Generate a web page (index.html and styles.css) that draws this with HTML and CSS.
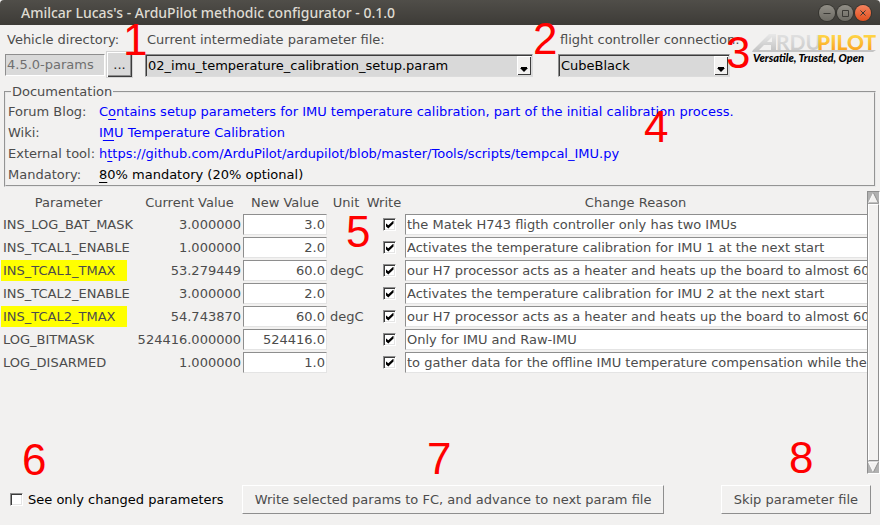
FILE: index.html
```html
<!DOCTYPE html>
<html lang="en">
<head>
<meta charset="utf-8">
<title>Amilcar Lucas's - ArduPilot methodic configurator - 0.1.0</title>
<link rel="stylesheet" href="styles.css">
</head>
<body>
<header class="titlebar">
  <h1 class="title">Amilcar Lucas's - ArduPilot methodic configurator - 0.1.0</h1>
  <div class="window-buttons">
    <button class="wb" aria-label="Minimize"><svg viewBox="0 0 16 16"><path d="M4.5 8.5h7"/></svg></button>
    <button class="wb" aria-label="Maximize"><svg viewBox="0 0 16 16"><path d="M5.5 5.5h6v6h-6z"/></svg></button>
    <button class="wb close" aria-label="Close"><svg viewBox="0 0 16 16"><path d="M5.5 5.5l5 5m0-5l-5 5"/></svg></button>
  </div>
</header>

<section class="top">
  <div class="field directory">
    <label for="dir">Vehicle directory:</label>
    <div class="controls">
      <input id="dir" class="dir-input" value="4.5.0-params" readonly>
      <button class="browse">...</button>
    </div>
  </div>
  <div class="field file">
    <label for="file">Current intermediate parameter file:</label>
    <div class="combo">
      <select id="file"><option>02_imu_temperature_calibration_setup.param</option></select>
      <span class="arrow"><svg viewBox="0 0 8 5"><path d="M1 0h6v1h1L4 5 0 1h1z"/></svg></span>
    </div>
  </div>
  <div class="field connection">
    <label for="conn">flight controller connection:</label>
    <div class="combo">
      <select id="conn"><option>CubeBlack</option></select>
      <span class="arrow"><svg viewBox="0 0 8 5"><path d="M1 0h6v1h1L4 5 0 1h1z"/></svg></span>
    </div>
  </div>
  <svg class="logo" viewBox="0 0 126 36" role="img" aria-label="ArduPilot">
    <defs>
      <linearGradient id="silver" x1="0" y1="0" x2="0" y2="1"><stop offset="0" stop-color="#e8e8e8"/><stop offset="1" stop-color="#c6c6c6"/></linearGradient>
      <linearGradient id="gold" x1="0" y1="0" x2="0" y2="1"><stop offset="0.2" stop-color="#ffd94a"/><stop offset="0.9" stop-color="#f9a01f"/></linearGradient>
    </defs>
    <path d="M1 20h123l-3 2H0z" fill="#c4c4c4"/>
    <path d="M1 20L17 4h7v16h-5v-5h-7l-5 5z" fill="url(#silver)"/>
    <path d="M15 12l5-5v5z" fill="#f2f1f0"/>
    <text class="brand" x="24" y="20" fill="url(#silver)">RDU</text>
    <text class="brand gold" x="65" y="20" fill="url(#gold)">PILOT</text>
    <text class="motto" x="1" y="32">Versatile, Trusted, Open</text>
  </svg>
</section>

<fieldset class="docs">
  <legend>Documentation</legend>
  <dl>
    <dt>Forum Blog:</dt><dd><a href="#blog">C<u>o</u>ntains setup parameters for IMU temperature calibration, part of the initial calibration process.</a></dd>
    <dt>Wiki:</dt><dd><a href="#wiki">I<u>M</u>U Temperature Calibration</a></dd>
    <dt>External tool:</dt><dd><a href="#tool">h<u>t</u>tps://github.com/ArduPilot/ardupilot/blob/master/Tools/scripts/tempcal_IMU.py</a></dd>
    <dt>Mandatory:</dt><dd><u>8</u>0% mandatory (20% optional)</dd>
  </dl>
</fieldset>

<main class="params">
  <div class="scroll">
    <table>
      <colgroup><col class="c-name"><col class="c-cur"><col class="c-new"><col class="c-unit"><col class="c-write"><col></colgroup>
      <thead><tr><th>Parameter</th><th>Current Value</th><th>New Value</th><th>Unit</th><th>Write</th><th>Change Reason</th></tr></thead>
      <tbody>
        <tr><td><span class="name">INS_LOG_BAT_MASK</span></td><td class="num">3.000000</td><td><input class="entry num" aria-label="New value" value="3.0"></td><td></td><td class="write"><input type="checkbox" aria-label="Write" checked></td><td><input class="entry" aria-label="Change reason" value="the Matek H743 fligth controller only has two IMUs"></td></tr>
        <tr><td><span class="name">INS_TCAL1_ENABLE</span></td><td class="num">1.000000</td><td><input class="entry num" aria-label="New value" value="2.0"></td><td></td><td class="write"><input type="checkbox" aria-label="Write" checked></td><td><input class="entry" aria-label="Change reason" value="Activates the temperature calibration for IMU 1 at the next start"></td></tr>
        <tr><td><span class="name missing">INS_TCAL1_TMAX</span></td><td class="num">53.279449</td><td><input class="entry num" aria-label="New value" value="60.0"></td><td>degC</td><td class="write"><input type="checkbox" aria-label="Write" checked></td><td><input class="entry" aria-label="Change reason" value="our H7 processor acts as a heater and heats up the board to almost 60"></td></tr>
        <tr><td><span class="name">INS_TCAL2_ENABLE</span></td><td class="num">3.000000</td><td><input class="entry num" aria-label="New value" value="2.0"></td><td></td><td class="write"><input type="checkbox" aria-label="Write" checked></td><td><input class="entry" aria-label="Change reason" value="Activates the temperature calibration for IMU 2 at the next start"></td></tr>
        <tr><td><span class="name missing">INS_TCAL2_TMAX</span></td><td class="num">54.743870</td><td><input class="entry num" aria-label="New value" value="60.0"></td><td>degC</td><td class="write"><input type="checkbox" aria-label="Write" checked></td><td><input class="entry" aria-label="Change reason" value="our H7 processor acts as a heater and heats up the board to almost 60"></td></tr>
        <tr><td><span class="name">LOG_BITMASK</span></td><td class="num">524416.000000</td><td><input class="entry num" aria-label="New value" value="524416.0"></td><td></td><td class="write"><input type="checkbox" aria-label="Write" checked></td><td><input class="entry" aria-label="Change reason" value="Only for IMU and Raw-IMU"></td></tr>
        <tr><td><span class="name">LOG_DISARMED</span></td><td class="num">1.000000</td><td><input class="entry num" aria-label="New value" value="1.0"></td><td></td><td class="write"><input type="checkbox" aria-label="Write" checked></td><td><input class="entry" aria-label="Change reason" value="to gather data for the offline IMU temperature compensation while the"></td></tr>
      </tbody>
    </table>
  </div>
  <div class="scrollbar">
    <svg viewBox="0 0 11 12"><path d="M5.5 1L10.5 11H.5z" fill="#f2f1f0"/><path d="M.5 11L5.5 1" stroke="#fff"/><path d="M5.5 1l5 10H.5" fill="none" stroke="#8e8e8e"/></svg>
    <div class="thumb"></div>
    <svg viewBox="0 0 11 12"><path d="M5.5 11L10.5 1H.5z" fill="#f2f1f0"/><path d="M10.5 1H.5l5 10" fill="none" stroke="#fff"/><path d="M10.5 1l-5 10" stroke="#8e8e8e"/></svg>
  </div>
</main>

<footer class="bottom">
  <label class="only"><input type="checkbox">See only changed parameters</label>
  <button class="action">Write selected params to FC, and advance to next param file</button>
  <button class="action skip">Skip parameter file</button>
</footer>

<div class="marks">
  <span class="mark m1">1</span><span class="mark m2">2</span><span class="mark m3">3</span><span class="mark m4">4</span>
  <span class="mark m5">5</span><span class="mark m6">6</span><span class="mark m7">7</span><span class="mark m8">8</span>
</div>
</body>
</html>
```
FILE: styles.css
```css
* { box-sizing: border-box; }

body {
  position: relative;
  display: flex;
  flex-direction: column;
  min-height: 100vh;
  margin: 0;
  background: #f2f1f0;
  color: #4c4c4c;
  font: 13px/21px "DejaVu Sans", sans-serif;
}

button, input, select { font: inherit; color: inherit; margin: 0; border-radius: 0; }

.titlebar {
  display: flex;
  align-items: center;
  justify-content: space-between;
  height: 25px;
  padding: 0 9px 0 21px;
  background: linear-gradient(#504e49, #3d3b37);
  border-radius: 4px 4px 0 0;
}
.title {
  margin: 0;
  color: #dfdbd2;
  font: 500 14px/24px "Noto Sans", sans-serif;
}
.window-buttons { display: flex; gap: 2px; }
.wb {
  display: flex;
  width: 16px;
  height: 16px;
  padding: 0;
  border: 0;
  border-radius: 50%;
  background: linear-gradient(#918e86, #6c6a63);
  box-shadow: 0 0 0 1px #35342f;
}
.wb svg { width: 16px; height: 16px; fill: none; stroke: #3a3935; }
.close { background: linear-gradient(#f4825e, #e2511f); }

.top {
  display: flex;
  align-items: flex-start;
  padding: 4px 2px 0 5px;
}
.field { display: flex; flex-direction: column; }
.field label { padding-left: 2px; white-space: nowrap; }
.directory { width: 128px; margin-right: 12px; }
.file { flex: 1; margin-right: 25px; }
.connection { width: 172px; margin-right: 22px; }
.controls { display: flex; align-items: center; gap: 1px; height: 29px; }
.dir-input {
  flex: 1;
  min-width: 0;
  height: 22px;
  padding: 0 1px;
  border: 1px solid;
  border-color: #8e8e8e #fff #fff #8e8e8e;
  background: #d9d9d9;
  color: #6f6f6f;
}
.browse {
  width: 27px;
  height: 27px;
  padding: 0;
  border: 1px solid #d4d4d4;
  background: #d9d9d9;
  box-shadow: inset 1px 1px #fff, inset -1px -1px #3c3c3c, inset -2px -2px #8e8e8e;
  color: #222;
}
.combo { position: relative; margin-top: 4px; }
.combo select {
  display: block;
  width: 100%;
  height: 23px;
  padding: 0 18px 0 2px;
  appearance: none;
  border: 1px solid;
  border-color: #8e8e8e #dcdcdc #dcdcdc #8e8e8e;
  background: #d9d9d9;
  box-shadow: inset 1px 1px #3c3c3c;
  color: #000;
}
.arrow {
  position: absolute;
  top: 2px;
  right: 2px;
  display: flex;
  align-items: flex-end;
  justify-content: center;
  width: 14px;
  height: 19px;
  padding-bottom: 3px;
  background: #f2f1f0;
  box-shadow: inset 1px 1px #fff, inset -1px -1px #3c3c3c;
  pointer-events: none;
}
.arrow svg { width: 8px; height: 5px; }

.logo { flex: none; width: 126px; height: 36px; margin-top: 1px; }
.brand { font: 700 21px "Lato", sans-serif; }
.gold { font-weight: 900; }
.motto { font: italic 900 11px "Lato", sans-serif; fill: #000; }

.docs {
  min-width: 0;
  margin: 4px;
  padding: 0 2px;
  border: 2px groove #e8e8e8;
}
.docs legend { margin-left: 3px; padding: 0 1px; line-height: 18px; }
.docs dl {
  display: grid;
  grid-template-columns: 91px 1fr;
  margin: 0;
}
.docs dd { margin: 0; color: #000; }
.docs a { color: #00f; text-decoration: none; }
.docs u { text-underline-offset: 3px; text-decoration-thickness: 1px; }

.params { display: flex; flex: 1; }
.scroll { flex: 1; min-width: 0; }
table { width: 100%; table-layout: fixed; border-collapse: collapse; }
.c-name { width: 137px; }
.c-cur { width: 105px; }
.c-new { width: 86px; }
.c-unit { width: 36px; }
.c-write { width: 40px; }
th { padding: 0; height: 22px; font-weight: 400; white-space: nowrap; }
td { height: 23px; padding: 1px; }
td:nth-child(4) { padding-left: 2px; }
td.num { padding: 1px 1px 1px 0; text-align: right; }
.name { display: inline-block; padding: 0 2px; }
.missing { padding-right: 12px; background: #ff0; }
.entry {
  display: block;
  width: 100%;
  height: 21px;
  padding: 0 0 0 1px;
  border: 1px solid;
  border-color: #8e8e8e #e4e4e4 #e4e4e4 #8e8e8e;
  background: #fff;
}
td:last-child { padding-right: 0; }
td:last-child .entry { border-right: 0; }
input.num { padding-right: 1px; text-align: right; }

input[type="checkbox"] {
  display: grid;
  place-items: center;
  flex: none;
  width: 13px;
  height: 13px;
  appearance: none;
  border: 1px solid;
  border-color: #8e8e8e #fff #fff #8e8e8e;
  background: #fff;
  box-shadow: inset 1px 1px #3c3c3c, inset -1px -1px #e4e4e4;
}
.write input { margin: 0 auto; }
input[type="checkbox"]:checked::before {
  content: "";
  width: 8px;
  height: 8px;
  background: #000;
  clip-path: polygon(0 30%, 35% 60%, 100% 0, 100% 38%, 35% 100%, 0 68%);
}
td.write { padding-left: 12px; }

.scrollbar {
  display: flex;
  flex-direction: column;
  width: 13px;
  border: 1px solid;
  border-color: #8e8e8e #fff #fff #8e8e8e;
  background: #b1b1b1;
}
.scrollbar svg { width: 11px; height: 12px; }
.thumb {
  flex: 1;
  border: 1px solid;
  border-color: #fff #8e8e8e #8e8e8e #fff;
  background: #f2f1f0;
}

.bottom {
  display: flex;
  align-items: center;
  padding: 11px 9px;
}
.only { display: flex; align-items: center; gap: 5px; color: #000; margin-right: 18px; padding-left: 1px; }
.action {
  height: 29px;
  padding: 0 12px;
  border: 1px solid;
  border-color: #fff #8e8e8e #8e8e8e #fff;
  background: #f2f1f0;
  white-space: nowrap;
}
.skip { margin-left: auto; }

.mark {
  position: absolute;
  color: #f00;
  font: 44px/32px "Liberation Sans", sans-serif;
}
.m1 { left: 123px; top: 24px; }
.m2 { left: 533px; top: 23px; }
.m3 { left: 726px; top: 37px; }
.m4 { left: 644px; top: 111px; }
.m5 { left: 346px; top: 216px; }
.m6 { left: 22px; top: 444px; }
.m7 { left: 427px; top: 443px; }
.m8 { left: 789px; top: 442px; }
```
